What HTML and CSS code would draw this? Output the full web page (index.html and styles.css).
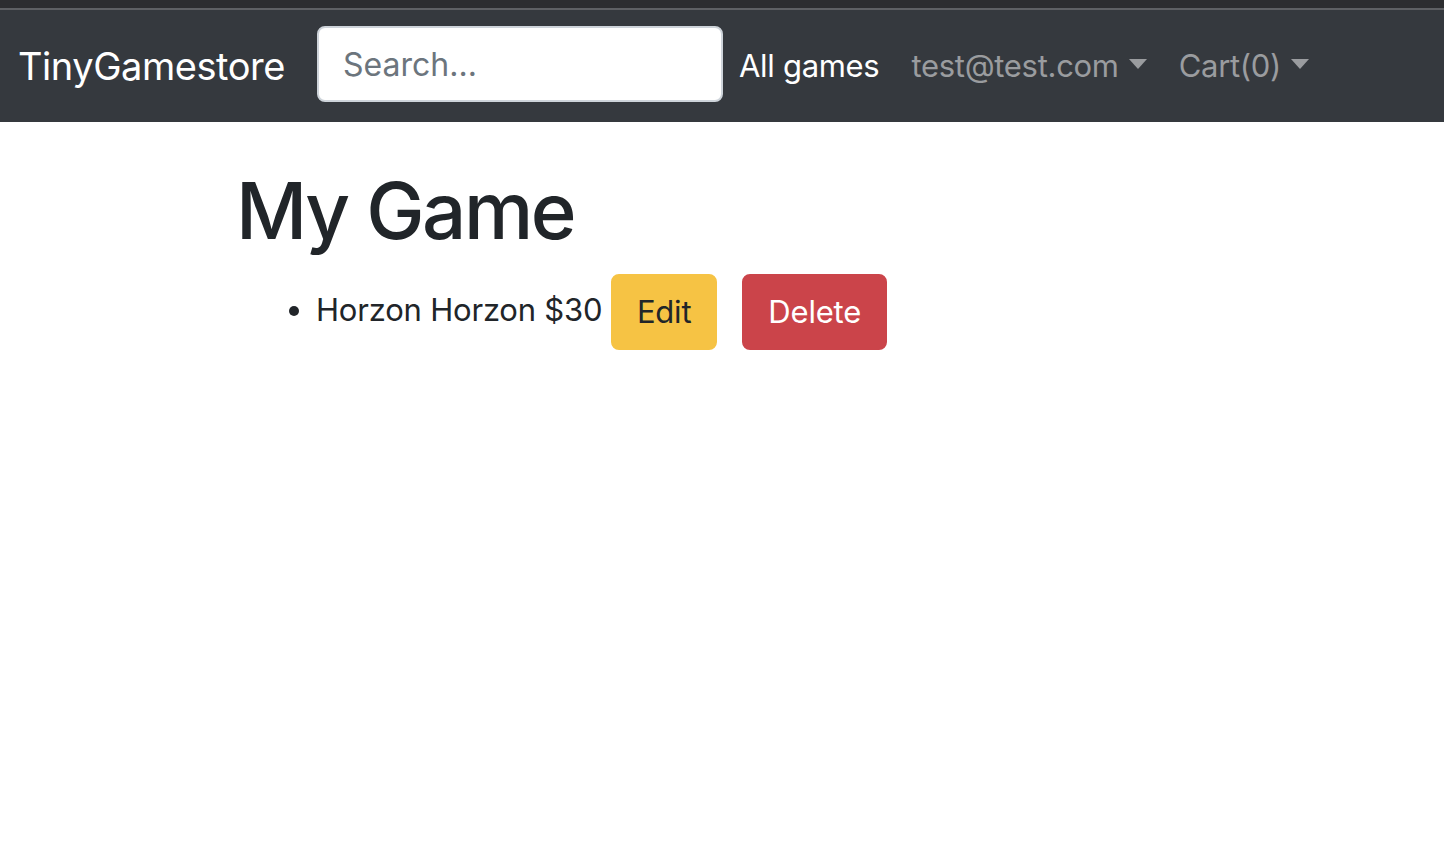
FILE: index.html
```html
<!DOCTYPE html>
<html lang="en">
<head>
<meta charset="utf-8">
<title>TinyGamestore</title>
<link rel="stylesheet" href="styles.css">
</head>
<body>
<div class="topstrip"></div>
<nav class="navbar">
  <a class="brand" href="#">TinyGamestore</a>
  <input class="search" type="text" placeholder="Search...">
  <ul class="nav">
    <li><a class="nav-link active" href="#">All games</a></li>
    <li><a class="nav-link dropdown" href="#">test@test.com</a></li>
    <li><a class="nav-link dropdown" href="#">Cart(0)</a></li>
  </ul>
</nav>
<main class="container">
  <h1 class="title">My Game</h1>
  <ul class="games">
    <li>Horzon Horzon $30 <a class="btn btn-warning" href="#">Edit</a><a class="btn btn-danger" href="#">Delete</a></li>
  </ul>
</main>
</body>
</html>
```
FILE: styles.css
```css
* { box-sizing: border-box; }
html, body { margin: 0; padding: 0; }
body {
  font-family: Inter, "Noto Sans", "Liberation Sans", sans-serif;
  font-size: 32px;
  line-height: 1.5;
  color: #212529;
  background: #fff;
}
.topstrip {
  height: 10px;
  background: #2c2d30;
  border-bottom: 2px solid #5e6064;
}
.navbar {
  display: flex;
  align-items: flex-start;
  height: 112px;
  padding: 16px 18px 0;
  background: #35393e;
}
.brand {
  color: #fff;
  text-decoration: none;
  font-size: 38px;
  line-height: 60px;
  padding: 10px 0;
  margin-right: 32px;
  letter-spacing: -0.45px;
}
.search {
  width: 406px;
  height: 76px;
  border: 2px solid #ced4da;
  border-radius: 8px;
  padding: 0 24px;
  font-family: inherit;
  font-size: 32px;
  color: #495057;
  background: #fff;
  outline: none;
}
.search::placeholder { color: #6c757d; }
.nav {
  display: flex;
  list-style: none;
  margin: 0;
  padding: 0;
}
.nav-link {
  display: block;
  padding: 16px;
  line-height: 48px;
  color: #9a9c9f;
  text-decoration: none;
  font-size: 31px;
  letter-spacing: -0.3px;
}
.nav-link.active { color: #fff; }
.dropdown::after {
  content: "";
  display: inline-block;
  margin-left: 10px;
  vertical-align: 8px;
  border-top: 10px solid;
  border-left: 9px solid transparent;
  border-right: 9px solid transparent;
}
.container {
  padding-left: 236px;
}
.title {
  margin: 42px 0 14px;
  font-size: 78px;
  font-weight: 500;
  line-height: 1.2;
  letter-spacing: -2.4px;
}
.games {
  margin: 0;
  padding-left: 80px;
  font-size: 31px;
  letter-spacing: -0.2px;
}
.games li { line-height: 76px; }
.btn {
  display: inline-block;
  padding: 12px 24px;
  border: 2px solid transparent;
  border-radius: 8px;
  font-size: 31px;
  line-height: 48px;
  text-decoration: none;
  vertical-align: middle;
}
.btn-warning {
  background: #f6c344;
  border-color: #f6c344;
  color: #212529;
  margin-right: 25px;
}
.btn-danger {
  background: #cb444a;
  border-color: #cb444a;
  color: #fff;
}
```
